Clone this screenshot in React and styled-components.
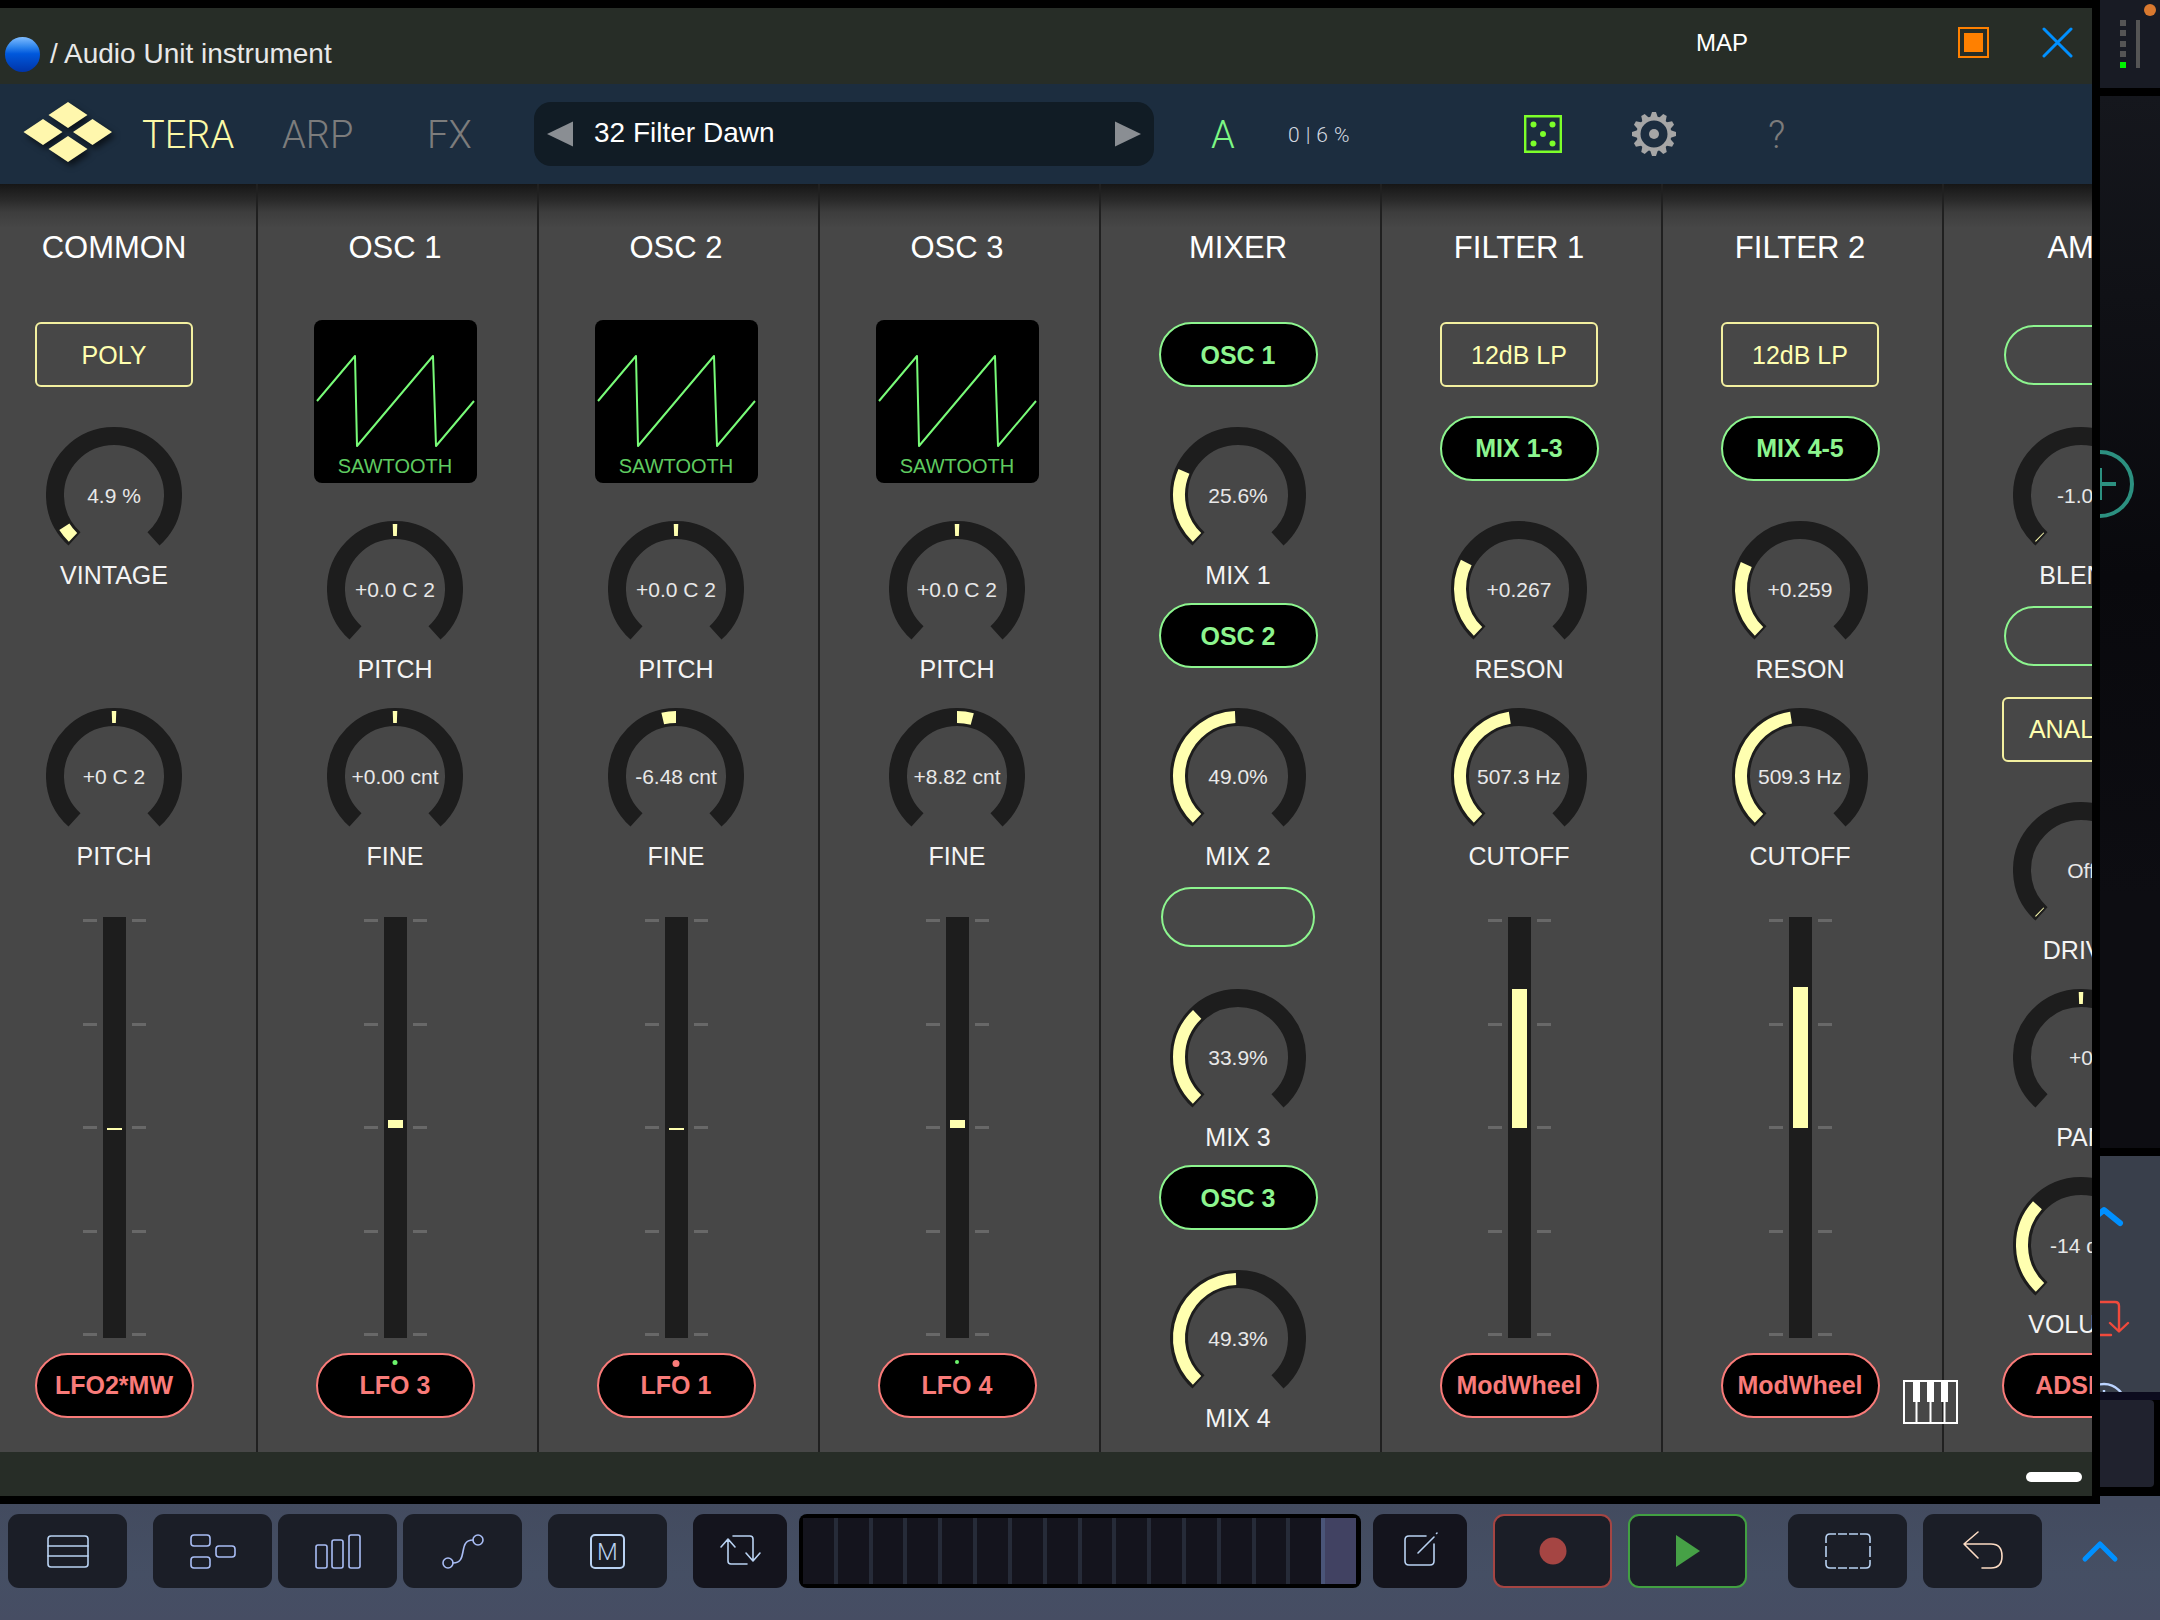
import React from "react";
import styled, { createGlobalStyle } from "styled-components";

const GlobalStyle = createGlobalStyle`
  * {
    box-sizing: border-box;
  }
  body {
    margin: 0;
    background: #000;
    font-family: "Liberation Sans", Arial, sans-serif;
  }
  button {
    font-family: inherit;
    padding: 0;
    border: none;
    background: none;
    color: inherit;
    cursor: pointer;
  }
`;

const YELLOW = "#ffffb0";
const GREEN = "#8df58f";
const RED = "#f97b79";
const BLUE = "#0090ff";
const ICE = "#b9d2f2";
const LILAC = "#a9bdf5";

/* ---------- page ---------- */

const Page = styled.div`
  min-height: 100vh;
  display: flex;
  flex-direction: column;
`;

const Main = styled.main`
  flex: 1;
  display: grid;
  grid-template-columns: minmax(0, 1fr) 60px;
`;

const PluginWindow = styled.section`
  display: flex;
  flex-direction: column;
  min-width: 0;
  border: solid #000;
  border-width: 8px 8px 8px 0;
`;

/* ---------- title bar ---------- */

const TitleBar = styled.header`
  height: 76px;
  display: flex;
  align-items: center;
  background: #272d27;
  padding-right: 19px;
`;

const Ball = styled.span`
  width: 35px;
  height: 35px;
  margin: 16px 10px 0 5px;
  border-radius: 50%;
  background: linear-gradient(#7fbcff 0%, #2f86ee 28%, #0058dc 48%, #0034a8 100%);
`;

const WindowTitle = styled.h1`
  flex: 1;
  margin: 16px 0 0;
  font-size: 28px;
  line-height: 32px;
  font-weight: 400;
  color: #e8e8e8;
`;

const MapButton = styled.button`
  font-size: 24px;
  line-height: 28px;
  color: #fff;
  margin: 0 210px 6px 0;
`;

const WindowIcons = styled.div`
  display: flex;
  gap: 53px;
  margin-bottom: 8px;

  button,
  svg {
    display: block;
  }
`;

/* ---------- header ---------- */

const Header = styled.nav`
  height: 100px;
  display: flex;
  align-items: center;
  background: #1c2d3f;
`;

const Logo = styled.svg`
  margin: 0 26px 0 20px;
  filter: drop-shadow(3px 4px 3px rgba(0, 0, 0, 0.6));
`;

const Tab = styled.button`
  width: ${(p) => p.$width}px;
  padding-top: 2px;
  text-align: left;
  font-family: Roboto, "Liberation Sans", sans-serif;
  font-weight: 300;
  font-size: 38px;
  line-height: 44px;
  color: ${(p) => p.$color || "#7c7c7c"};
`;

const HelpTab = styled(Tab)`
  padding-left: 10px;
`;

const Preset = styled.div`
  width: 620px;
  height: 64px;
  margin-right: 57px;
  padding: 0 12px;
  display: flex;
  align-items: center;
  border-radius: 17px;
  background: #111c25;

  svg {
    display: block;
  }
`;

const PresetName = styled.button`
  flex: 1;
  text-align: left;
  padding-left: 20px;
  font-size: 28px;
  line-height: 32px;
  color: #fff;
  margin-bottom: 2px;
`;

const Usage = styled.span`
  width: 236px;
  padding-top: 2px;
  display: flex;
  gap: 6px;
  font-family: Roboto, "Liberation Sans", sans-serif;
  font-weight: 300;
  font-size: 21px;
  line-height: 24px;
  color: #d5dae0;
`;

const HeaderIcon = styled.button`
  width: ${(p) => p.$width}px;

  svg {
    display: block;
  }
`;

/* ---------- rack ---------- */

const Rack = styled.div`
  position: relative;
  flex: 1;
  display: flex;
  overflow: hidden;
  background: linear-gradient(#161616 0, #2a2a2a 16px, #3d3d3d 28px, #474747 44px);
`;

const Column = styled.section`
  flex: 0 0 281px;
  display: flex;
  flex-direction: column;
  padding: 0 5px 20px 0;
  border-right: 2px solid #202020;

  &:first-child {
    margin-left: -23px;
  }
`;

const ColumnTitle = styled.h2`
  height: 124px;
  margin: 0;
  text-align: center;
  font-size: 31px;
  line-height: 127px;
  font-weight: 400;
  color: #fff;
`;

const Slots = styled.div`
  flex: 1;
  display: grid;
  grid-template-rows: repeat(12, minmax(0, 1fr));
  grid-template-columns: minmax(0, 1fr);
`;

const Slot = styled.div`
  grid-row: ${(p) => p.$row} / span ${(p) => p.$span};
  display: grid;
  place-items: center;
`;

const Choice = styled.button`
  width: 158px;
  height: 65px;
  border: 2px solid #f3f0a0;
  border-radius: 6px;
  font-size: 25px;
  line-height: 28px;
  color: ${YELLOW};
`;

const Pill = styled.button`
  position: relative;
  width: ${(p) => (p.$empty ? 154 : 159)}px;
  height: ${(p) => (p.$empty ? 60 : 65)}px;
  border: 2px solid ${(p) => p.$color};
  border-radius: 33px;
  background: ${(p) => (p.$empty ? "transparent" : "#000")};
  font-size: 25px;
  line-height: 28px;
  font-weight: 700;
  color: ${(p) => p.$color};
  white-space: nowrap;
`;

const Led = styled.i`
  position: absolute;
  top: 5px;
  left: 50%;
  width: ${(p) => p.$size}px;
  height: ${(p) => p.$size}px;
  border-radius: 50%;
  transform: translateX(-50%);
  background: ${(p) => p.$color};
`;

const Wave = styled.button`
  width: 163px;
  height: 163px;
  display: flex;
  flex-direction: column;
  align-items: center;
  border-radius: 8px;
  background: #000;
  font-size: 20px;
  line-height: 24px;
  color: #5fcb60;
`;

const KnobSlot = styled(Slot).attrs({ as: "label" })`
  > * {
    grid-area: 1 / 1;
  }
`;

const KnobInput = styled.input`
  width: 136px;
  height: 136px;
  margin: 0;
  opacity: 0;
`;

const KnobValue = styled.output`
  padding-top: 2px;
  font-size: 21px;
  line-height: 24px;
  color: #e8e8e8;
`;

const KnobLabel = styled.span`
  align-self: end;
  font-size: 25px;
  line-height: 28px;
  color: #f4f4f4;
`;

const SliderSlot = styled(Slot)`
  padding-top: 47px;
  display: flex;
  justify-content: center;
  align-items: stretch;
  gap: 6px;
`;

const Ticks = styled.div`
  width: 14px;
  padding: 2px 0;
  display: flex;
  flex-direction: column;
  justify-content: space-between;

  i {
    height: 3px;
    background: #686868;
  }
`;

const SliderInput = styled.input`
  appearance: none;
  writing-mode: vertical-lr;
  direction: rtl;
  width: 23px;
  height: auto;
  margin: 0;
  background: linear-gradient(
      to top,
      transparent ${(p) => p.$from}%,
      ${YELLOW} ${(p) => p.$from}%,
      ${YELLOW} ${(p) => p.$to}%,
      transparent ${(p) => p.$to}%
    )
    center / 15px 100% no-repeat #1d1d1d;

  &::-webkit-slider-thumb {
    appearance: none;
    width: 23px;
    height: 4px;
    background: transparent;
  }
`;

const KeysButton = styled.button`
  position: absolute;
  right: 134px;
  bottom: 28px;

  svg {
    display: block;
  }
`;

const WindowFoot = styled.footer`
  height: 44px;
  display: flex;
  justify-content: flex-end;
  align-items: center;
  padding: 6px 10px 0 0;
  background: #272d27;
`;

const Grip = styled.button`
  width: 56px;
  height: 10px;
  border-radius: 5px;
  background: #fff;
`;

/* ---------- side strip ---------- */

const Side = styled.aside`
  display: flex;
  flex-direction: column;
  background: #000;

  svg {
    display: block;
  }
`;

const SideMeter = styled.div`
  height: 88px;
  margin-bottom: 8px;
  background: #181b24;
`;

const SideCanvas = styled.div`
  flex: 1;
  padding-top: 354px;
  margin-bottom: 8px;
  background: linear-gradient(#15171d 0, #101116 200px, #09090d 480px, #0d0d12 800px);
`;

const SideTools = styled.div`
  height: 244px;
  border-bottom: 8px solid #0c0b1e;
  background: #393f4b;
  display: flex;
  flex-direction: column;
`;

const SideButton = styled.button`
  flex: 0 0 ${(p) => p.$height}px;
`;

const SidePad = styled.div`
  height: 87px;
  margin: 0 6px 9px 0;
  border-radius: 0 4px 4px 0;
  background: #20222e;
`;

const SideEnd = styled.div`
  height: 8px;
  background: #434b5f;
`;

/* ---------- bottom bar ---------- */

const BottomBar = styled.footer`
  height: 116px;
  padding: 10px 0 32px 8px;
  display: flex;
  background: linear-gradient(#434b5f, #454f64 60%, #464d63);
`;

const Group = styled.div`
  display: flex;
  flex: ${(p) => (p.$grow ? 1 : "none")};
  gap: ${(p) => p.$gap || 0}px;
  margin-right: ${(p) => p.$after ?? 26}px;
`;

const BarButton = styled.button`
  width: ${(p) => (p.$narrow ? 94 : 119)}px;
  height: 74px;
  display: grid;
  place-items: center;
  border-radius: 11px;
  border: ${(p) => (p.$edge ? `2px solid ${p.$edge}` : "none")};
  background: ${(p) => (p.$narrow ? "#14141d" : "#1b1e27")};
`;

const MuteBox = styled.span`
  width: 35px;
  height: 35px;
  border: 2px solid ${ICE};
  border-radius: 5px;
  font-family: Roboto, "Liberation Sans", sans-serif;
  font-weight: 300;
  font-size: 24px;
  line-height: 32px;
  color: ${ICE};
`;

const Timeline = styled.div`
  flex: 1;
  height: 74px;
  padding: 4px 5px 4px 4px;
  display: flex;
  border-radius: 8px;
  background: #000;
`;

const Step = styled.span`
  flex: 1 1 0;
  background: ${(p) => (p.$on ? "#414262" : "#14141d")};
  border-left: solid ${(p) => (p.$on ? "#4a5578" : "#262b38")};
  border-left-width: ${(p) => (p.$first ? 0 : 4)}px;
`;

const Expand = styled.button`
  width: 118px;
  height: 74px;
  display: grid;
  place-items: center;
`;

/* ---------- knob drawing ---------- */

function arc(r, from, to) {
  const point = (deg) => {
    const a = ((deg - 90) * Math.PI) / 180;
    return `${(r * Math.cos(a)).toFixed(2)} ${(r * Math.sin(a)).toFixed(2)}`;
  };
  return `M${point(from)}A${r} ${r} 0 ${to - from > 180 ? 1 : 0} 1 ${point(to)}`;
}

function Knob({ row, label, value, from = -136, to }) {
  return (
    <KnobSlot $row={row} $span={2}>
      <svg width="136" height="136" viewBox="-68 -68 136 136" fill="none">
        <path d={arc(59, -138, 138)} stroke="#1d1d1d" strokeWidth="18" />
        <path d={arc(59, from, to)} stroke={YELLOW} strokeWidth="12" />
      </svg>
      <KnobValue>{value}</KnobValue>
      <KnobLabel>{label}</KnobLabel>
      <KnobInput type="range" min="-136" max="136" defaultValue={to} />
    </KnobSlot>
  );
}

function Slider({ name, from, to }) {
  const ticks = (
    <Ticks>
      {[0, 1, 2, 3, 4].map((n) => (
        <i key={n} />
      ))}
    </Ticks>
  );
  return (
    <SliderSlot $row={7} $span={5}>
      {ticks}
      <SliderInput type="range" aria-label={name} defaultValue={to} $from={from} $to={to} />
      {ticks}
    </SliderSlot>
  );
}

function Waveform() {
  return (
    <Slot $row={1} $span={2}>
      <Wave>
        <svg width="163" height="134" fill="none" stroke="#78fb78" strokeWidth="2" strokeLinejoin="round">
          <path d="M3 81 41 36 43 126 119 36 122 126 160 81" />
        </svg>
        SAWTOOTH
      </Wave>
    </Slot>
  );
}

const percent = (v) => -136 + (v * 272) / 100;

function Part({ item, column }) {
  if (item.type === "knob") return <Knob {...item} />;
  if (item.type === "wave") return <Waveform />;
  if (item.type === "slider") return <Slider name={`${column} modulation`} {...item} />;
  if (item.type === "choice") {
    return (
      <Slot $row={item.row} $span={1}>
        <Choice>{item.text}</Choice>
      </Slot>
    );
  }
  return (
    <Slot $row={item.row} $span={1}>
      <Pill $color={item.color || GREEN} $empty={!item.text} aria-label={item.text || "Empty input"}>
        {item.led && <Led $color={item.led} $size={item.ledSize} />}
        {item.text}
      </Pill>
    </Slot>
  );
}

const knob = (row, label, value, to, from) => ({ type: "knob", row, label, value, to, from });
const choice = (row, text) => ({ type: "choice", row, text });
const pill = (row, text) => ({ type: "pill", row, text });
const mod = (text, led, ledSize) => ({ type: "pill", row: 12, text, color: RED, led, ledSize });
const slider = (from, to) => ({ type: "slider", from, to });

const columns = [
  {
    title: "COMMON",
    items: [
      choice(1, "POLY"),
      knob(2, "VINTAGE", "4.9 %", percent(4.9)),
      knob(5, "PITCH", "+0 C 2", 2, -2),
      slider(49.5, 50),
      mod("LFO2*MW"),
    ],
  },
  {
    title: "OSC 1",
    items: [
      { type: "wave" },
      knob(3, "PITCH", "+0.0 C 2", 2, -2),
      knob(5, "FINE", "+0.00 cnt", 2, -2),
      slider(50, 51.7),
      mod("LFO 3", "#6cf56c", 5),
    ],
  },
  {
    title: "OSC 2",
    items: [
      { type: "wave" },
      knob(3, "PITCH", "+0.0 C 2", 2, -2),
      knob(5, "FINE", "-6.48 cnt", 0, -13),
      slider(49.5, 50),
      mod("LFO 1", "#f97b79", 7),
    ],
  },
  {
    title: "OSC 3",
    items: [
      { type: "wave" },
      knob(3, "PITCH", "+0.0 C 2", 2, -2),
      knob(5, "FINE", "+8.82 cnt", 15, 0),
      slider(50, 51.7),
      mod("LFO 4", "#6cf56c", 4),
    ],
  },
  {
    title: "MIXER",
    items: [
      pill(1, "OSC 1"),
      knob(2, "MIX 1", "25.6%", percent(25.6)),
      pill(4, "OSC 2"),
      knob(5, "MIX 2", "49.0%", percent(49)),
      pill(7),
      knob(8, "MIX 3", "33.9%", percent(33.9)),
      pill(10, "OSC 3"),
      knob(11, "MIX 4", "49.3%", percent(49.3)),
    ],
  },
  {
    title: "FILTER 1",
    items: [
      choice(1, "12dB LP"),
      pill(2, "MIX 1-3"),
      knob(3, "RESON", "+0.267", percent(26.7)),
      knob(5, "CUTOFF", "507.3 Hz", percent(46.7)),
      slider(50, 83),
      mod("ModWheel"),
    ],
  },
  {
    title: "FILTER 2",
    items: [
      choice(1, "12dB LP"),
      pill(2, "MIX 4-5"),
      knob(3, "RESON", "+0.259", percent(25.9)),
      knob(5, "CUTOFF", "509.3 Hz", percent(46.8)),
      slider(50, 83.4),
      mod("ModWheel"),
    ],
  },
  {
    title: "AMP",
    items: [
      pill(1),
      knob(2, "BLEND", "-1.00", -135),
      pill(4),
      choice(5, "ANALOG"),
      knob(6, "DRIVE", "Off", -135),
      knob(8, "PAN", "+0", 2, -2),
      knob(10, "VOLUME", "-14 dB", percent(32.5)),
      mod("ADSR 1"),
    ],
  },
];

/* ---------- icons ---------- */

const gearTeeth = [0, 30, 60, 90, 120, 150, 180, 210, 240, 270, 300, 330];

function GearIcon() {
  return (
    <svg width="44" height="44" viewBox="-22 -22 44 44">
      <circle r="15.5" fill="none" stroke="#a6a6a6" strokeWidth="4" />
      <circle r="5" fill="#a6a6a6" />
      {gearTeeth.map((a) => (
        <path key={a} d="M-4-16-2-22H2L4-16Z" fill="#a6a6a6" transform={`rotate(${a})`} />
      ))}
    </svg>
  );
}

function BarIcon({ color = ICE, children }) {
  return (
    <svg
      width="50"
      height="44"
      viewBox="-25 -22 50 44"
      fill="none"
      stroke={color}
      strokeWidth="1.6"
      strokeLinecap="round"
      strokeLinejoin="round"
    >
      {children}
    </svg>
  );
}

export default function App() {
  return (
    <Page>
      <GlobalStyle />
      <Main>
        <PluginWindow>
          <TitleBar>
            <Ball />
            <WindowTitle>/ Audio Unit instrument</WindowTitle>
            <MapButton>MAP</MapButton>
            <WindowIcons>
              <button aria-label="Window size">
                <svg width="31" height="31" fill="none" stroke="#ff8000" strokeWidth="2">
                  <path d="M1 1h29v29h-29z" />
                  <path d="M6 6h19v19h-19z" fill="#ff8000" stroke="none" />
                </svg>
              </button>
              <button aria-label="Close">
                <svg width="31" height="31" stroke={BLUE} strokeWidth="3" strokeLinecap="round">
                  <path d="M2 2 29 29M29 2 2 29" />
                </svg>
              </button>
            </WindowIcons>
          </TitleBar>

          <Header>
            <Logo width="96" height="66" viewBox="20 101 96 66" fill="#fff7ad">
              <path d="M68 102 87.5 115 68 128 48.5 115ZM43 119 62.5 132 43 145 23.5 132ZM92.5 119 112 132 92.5 145 73 132ZM68 136 87.5 149 68 162 48.5 149Z" />
            </Logo>
            <Tab $width={140} $color="#fbf9a6">TERA</Tab>
            <Tab $width={145}>ARP</Tab>
            <Tab $width={107}>FX</Tab>
            <Preset>
              <button aria-label="Previous preset">
                <svg width="28" height="28" fill="#8a8e93">
                  <path d="M1 14 27 1.5V26.5Z" />
                </svg>
              </button>
              <PresetName>32 Filter Dawn</PresetName>
              <button aria-label="Next preset">
                <svg width="28" height="28" fill="#8a8e93">
                  <path d="M27 14 1 1.5V26.5Z" />
                </svg>
              </button>
            </Preset>
            <Tab $width={77} $color="#7cf784">A</Tab>
            <Usage>
              <span>0</span>
              <span>|</span>
              <span>6</span>
              <span>%</span>
            </Usage>
            <HeaderIcon $width={108} aria-label="Randomize">
              <svg width="38" height="38" viewBox="-19 -19 38 38" fill="#7dff2a">
                <path d="M-17.8-17.8h35.6v35.6h-35.6z" fill="none" stroke="#7dff2a" strokeWidth="2.4" />
                <circle cx="-9.5" cy="-9.5" r="3" />
                <circle cx="9.5" cy="-9.5" r="3" />
                <circle r="3" />
                <circle cx="-9.5" cy="9.5" r="3" />
                <circle cx="9.5" cy="9.5" r="3" />
              </svg>
            </HeaderIcon>
            <HeaderIcon $width={126} aria-label="Settings">
              <GearIcon />
            </HeaderIcon>
            <HelpTab $width={110} aria-label="Help">?</HelpTab>
          </Header>

          <Rack>
            {columns.map((c) => (
              <Column key={c.title}>
                <ColumnTitle>{c.title}</ColumnTitle>
                <Slots>
                  {c.items.map((item, i) => (
                    <Part key={i} item={item} column={c.title} />
                  ))}
                </Slots>
              </Column>
            ))}
            <KeysButton aria-label="Keyboard">
              <svg width="55" height="44" fill="none" stroke="#fff" strokeWidth="2">
                <path d="M1 1h53v42H1zM13.5 20v23M27.5 20v23M41.5 20v23" />
                <path d="M10 1h7v21h-7zM24 1h7v21h-7zM38 1h7v21h-7z" fill="#fff" stroke="none" />
              </svg>
            </KeysButton>
          </Rack>

          <WindowFoot>
            <Grip aria-label="Resize" />
          </WindowFoot>
        </PluginWindow>

        <Side>
          <SideMeter>
            <svg width="60" height="88" fill="#555">
              <path d="M20 20h6v6h-6zM20 30h6v6h-6zM20 41h6v6h-6zM20 51h6v6h-6zM36 20h4v48h-4z" />
              <path d="M20 62h6v6h-6z" fill="#00f500" />
              <circle cx="50" cy="10" r="6" fill="#d9792f" />
            </svg>
          </SideMeter>
          <SideCanvas>
            <button aria-label="Add">
              <svg width="36" height="68" viewBox="0 -34 36 68" fill="none" stroke="#2c9080" strokeWidth="4">
                <circle r="32" />
                <path d="M0-16V16M0 0H16" />
              </svg>
            </button>
          </SideCanvas>
          <SideTools>
            <SideButton $height={96} aria-label="Show more">
              <svg width="60" height="96" fill="none" stroke={BLUE} strokeWidth="6" strokeLinecap="round" strokeLinejoin="round">
                <path d="M-12 67 4 54 20 67" />
              </svg>
            </SideButton>
            <SideButton $height={112} aria-label="Loop">
              <svg width="60" height="112" fill="none" stroke="#f04a3c" strokeWidth="2.4" strokeLinecap="round" strokeLinejoin="round">
                <path d="M-10 50H15Q19 50 19 54V79M10 71 19 79.5 28 71M-10 83H11" />
              </svg>
            </SideButton>
            <SideButton $height={28} aria-label="Level">
              <svg width="60" height="28" fill="none" stroke="#bcd4ff" strokeWidth="2.4">
                <circle cx="4" cy="41" r="21" />
                <path d="M4 26v4" />
              </svg>
            </SideButton>
          </SideTools>
          <SidePad />
          <SideEnd />
        </Side>
      </Main>

      <BottomBar>
        <Group>
          <BarButton aria-label="List">
            <BarIcon>
              <rect x="-20" y="-15" width="40" height="31" rx="3" />
              <path d="M-20-5H20M-20 5H20" />
            </BarIcon>
          </BarButton>
        </Group>
        <Group $gap={6}>
          <BarButton aria-label="Routing">
            <BarIcon color={LILAC}>
              <rect x="-22" y="-16" width="19" height="11" rx="3" />
              <rect x="3" y="-5" width="19" height="11" rx="3" />
              <rect x="-22" y="6" width="19" height="11" rx="3" />
            </BarIcon>
          </BarButton>
          <BarButton aria-label="Mixer">
            <BarIcon color={LILAC}>
              <rect x="-22" y="-6" width="11" height="23" rx="2" />
              <rect x="-6" y="-11" width="11" height="28" rx="2" />
              <rect x="11" y="-16" width="11" height="33" rx="2" />
            </BarIcon>
          </BarButton>
          <BarButton aria-label="Automation">
            <BarIcon color={LILAC}>
              <circle cx="-15" cy="12" r="5" />
              <circle cx="15" cy="-11" r="5" />
              <path d="M-10 12C6 12-6-11 10-11" />
            </BarIcon>
          </BarButton>
        </Group>
        <Group>
          <BarButton aria-label="Mute">
            <MuteBox>M</MuteBox>
          </BarButton>
        </Group>
        <Group $grow $gap={12}>
          <BarButton $narrow aria-label="Loop">
            <BarIcon>
              <path d="M-7-15H10Q13-15 13-12V9M6 2 13 10 20 2M7 13H-9Q-12 13-12 10V-11M-19-4-12-12-5-4" />
            </BarIcon>
          </BarButton>
          <Timeline>
            {Array.from({ length: 16 }, (_, i) => (
              <Step key={i} $first={i === 0} $on={i === 15} />
            ))}
          </Timeline>
          <BarButton $narrow aria-label="Edit">
            <BarIcon>
              <path d="M6-15H-11Q-15-15-15-11V10Q-15 14-11 14H10Q14 14 14 10V-7M-2 2 14-14M16.5-17.5 17-18" />
            </BarIcon>
          </BarButton>
        </Group>
        <Group $gap={16} $after={41}>
          <BarButton $edge="#a54543" aria-label="Record">
            <BarIcon>
              <circle r="13.5" fill="#a54543" stroke="none" />
            </BarIcon>
          </BarButton>
          <BarButton $edge="#42a042" aria-label="Play">
            <BarIcon>
              <path d="M-12-16 12 0-12 16Z" fill="#46a146" stroke="none" />
            </BarIcon>
          </BarButton>
        </Group>
        <Group $gap={16} $after={0}>
          <BarButton aria-label="Select">
            <BarIcon>
              <path d="M-12-17H-18Q-22-17-22-13V-8M-10-17H-1M1-17H10M12-17H18Q22-17 22-13V-8M22-5V6M22 9V13Q22 17 18 17H12M10 17H1M-1 17H-10M-12 17H-18Q-22 17-22 13V9M-22 6V-5" strokeLinecap="butt" />
            </BarIcon>
          </BarButton>
          <BarButton aria-label="Undo">
            <BarIcon color="#fddcc4">
              <path d="M-5-19-19-7-5 7M-19-7H8Q19-7 19 5 19 17 8 17H-1" />
            </BarIcon>
          </BarButton>
        </Group>
        <Expand aria-label="Show more">
          <svg width="44" height="28" fill="none" stroke={BLUE} strokeWidth="5" strokeLinecap="round" strokeLinejoin="round">
            <path d="M6 22 21 7 36 22" />
          </svg>
        </Expand>
      </BottomBar>
    </Page>
  );
}
